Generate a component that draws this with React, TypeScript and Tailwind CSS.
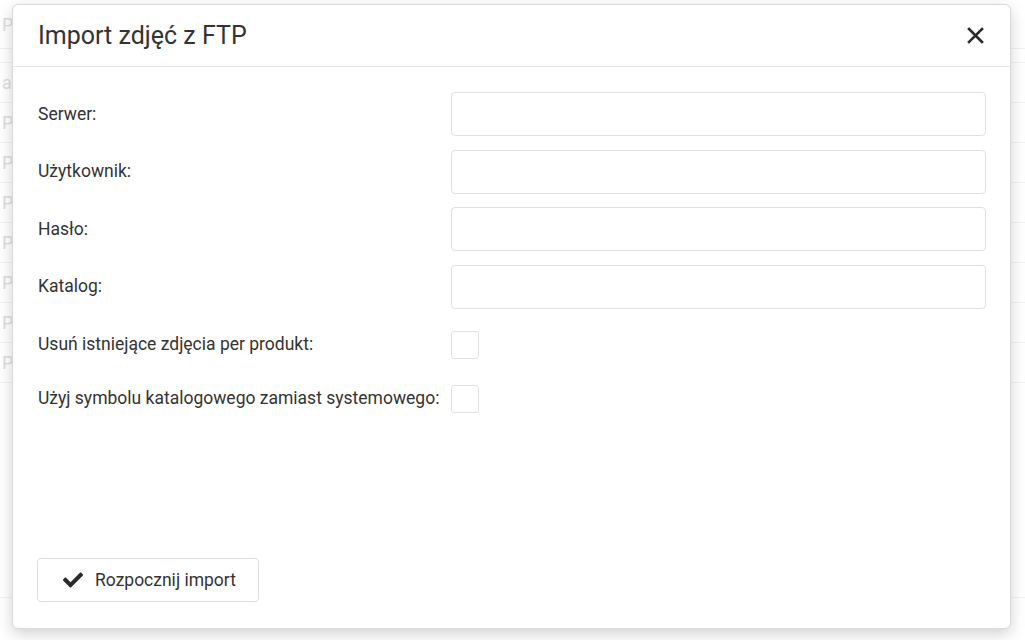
import { FaCheck } from "react-icons/fa"

const bgRows = ["a", "Pj", "Pj", "Pj", "Pj", "Pj", "Pj", "Pj"]

function TextRow({ label }: { label: string }) {
  return (
    <div className="flex items-center">
      <label className="w-[413px] text-[17.5px] text-[#333]">{label}</label>
      <div className="h-[44px] flex-1 rounded-[4px] border border-[#e0e0e0] bg-white"></div>
    </div>
  )
}

function CheckRow({ label }: { label: string }) {
  return (
    <div className="flex items-center">
      <label className="w-[413px] text-[17.5px] text-[#333]">{label}</label>
      <div className="h-[28px] w-[28px] rounded-[3px] border border-[#e0e0e0] bg-white"></div>
    </div>
  )
}

export default function App() {
  return (
    <div
      className="relative h-[640px] w-[1025px] overflow-hidden bg-white"
      style={{ fontFamily: "Roboto, 'Liberation Sans', sans-serif" }}
    >
      {/* faded page underneath */}
      <div className="text-[18px] text-[#dedede]">
        <div className="flex h-[48px] items-center px-[2px]">Pr</div>
        <div className="h-[14px] border-t border-[#f2f2f2]"></div>
        <div className="border-t border-[#f2f2f2]">
          {bgRows.map((r, i) => (
            <div key={i} className="flex h-[40px] items-center border-b border-[#f2f2f2] px-[2px]">
              {r}
            </div>
          ))}
        </div>
        <div className="mt-[214px] border-t border-[#f2f2f2] px-[40px] pt-[4px]">200</div>
      </div>

      {/* modal */}
      <div className="absolute left-[12px] top-[4px] flex h-[625px] w-[999px] flex-col rounded-[6px] border border-[#d9d9d9] bg-white shadow-[0_5px_15px_rgba(0,0,0,0.18)]">
        <div className="flex h-[62px] items-center justify-between border-b border-[#e5e5e5] pl-[25px] pr-[26px]">
          <h4 className="text-[25px] font-normal text-[#333]">Import zdjęć z FTP</h4>
          <svg width="17" height="17" viewBox="0 0 17 17" className="-mt-[1px]">
            <path d="M2 2 L15 15 M15 2 L2 15" stroke="#2b2b2b" strokeWidth="2.6" strokeLinecap="square" />
          </svg>
        </div>

        <div className="flex flex-1 flex-col pl-[25px] pr-[24px] pt-[25px]">
          <div className="flex flex-col gap-[13.5px]">
            <TextRow label="Serwer:" />
            <TextRow label="Użytkownik:" />
            <TextRow label="Hasło:" />
            <TextRow label="Katalog:" />
          </div>
          <div className="mt-[22px] flex flex-col gap-[26px]">
            <CheckRow label="Usuń istniejące zdjęcia per produkt:" />
            <CheckRow label="Użyj symbolu katalogowego zamiast systemowego:" />
          </div>
          <div className="mt-auto mb-[26px]">
            <button className="-ml-[1px] flex h-[44px] w-[222px] items-center rounded-[4px] border border-[#dcdcdc] bg-white pl-[25px] text-[17.5px] text-[#333]">
              <FaCheck className="h-[20px] w-[20px] text-[#2b2b2b]" />
              <span className="ml-[12px]">Rozpocznij import</span>
            </button>
          </div>
        </div>
      </div>
    </div>
  )
}
